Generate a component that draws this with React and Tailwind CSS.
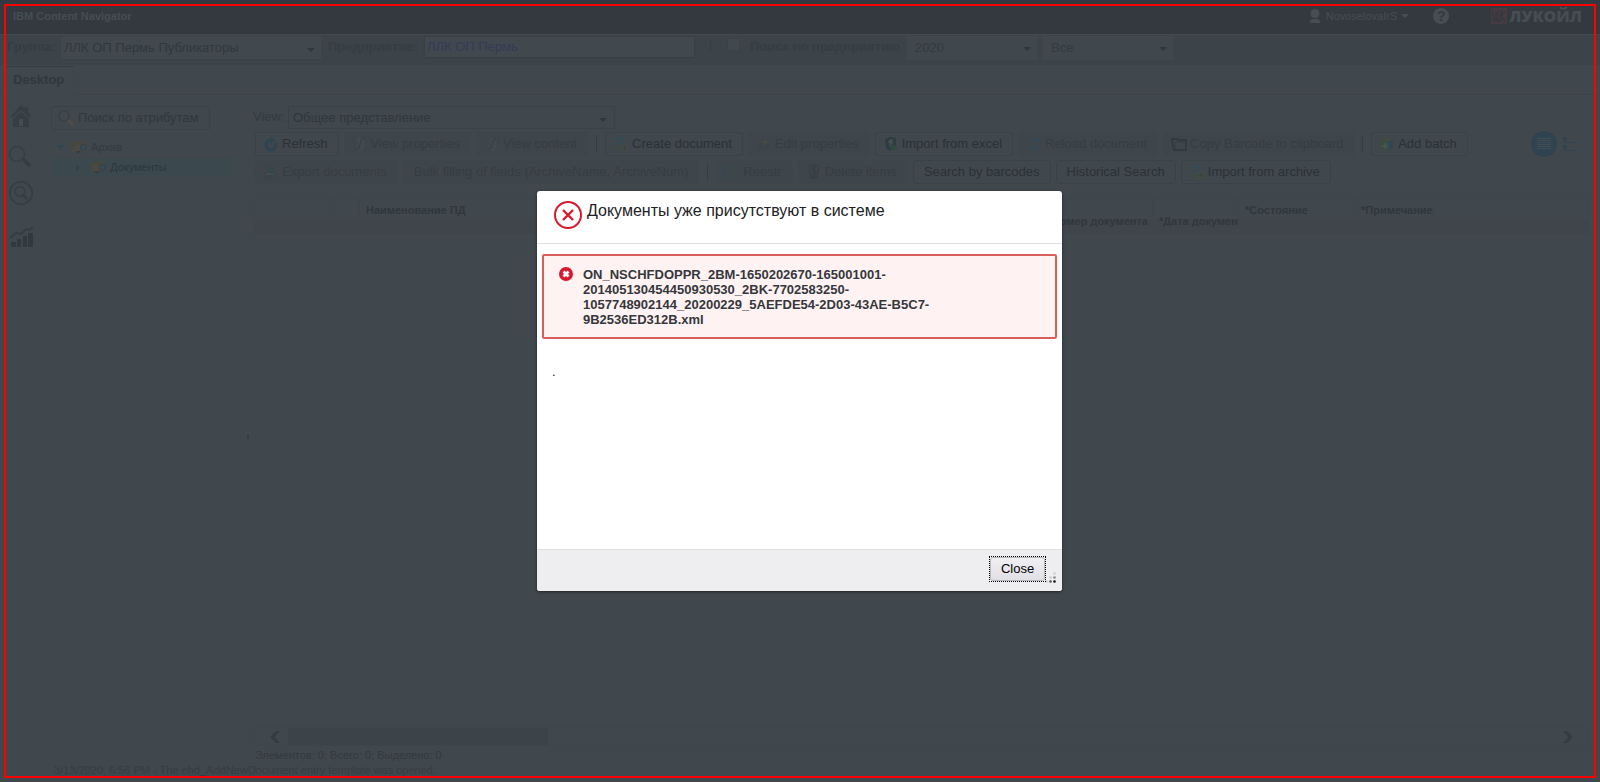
import React from "react";

const svg = "block h-4 w-4 shrink-0";

const icons = {
  refresh: (
    <svg className={svg} viewBox="0 0 16 16" fill="none">
      <path d="M12.6 7.2A5 5 0 1 1 8 4" stroke="#2f4452" strokeWidth="3.2" />
      <path d="M7 .4 12 4.2 7 8z" fill="#2f4452" />
    </svg>
  ),
  props: (
    <svg className={svg} viewBox="0 0 16 16" fill="none">
      <path d="M5 2h6l3 4-3 9H4z" fill="#42494f" />
      <path d="M3 13c3 1 4-1 5-5s2-5 4-6" stroke="#3a4148" strokeWidth="1.5" />
      <path d="m11 2 3 3-1 3" stroke="#3a4148" />
    </svg>
  ),
  create: (
    <svg className={svg} viewBox="0 0 16 16" fill="none">
      <path d="M1 3h9M8 1l3 2-3 2M3 7h7" stroke="#354c55" strokeWidth="1.4" />
      <path d="m2 9 5 1 2 4-8-1z" fill="#3b4947" />
      <circle cx="11.5" cy="11.5" r="3.5" fill="#424c43" />
      <path d="M11.500 9.500v4M9.500 11.500h4" stroke="#38423f" />
    </svg>
  ),
  edit: (
    <svg className={svg} viewBox="0 0 16 16" fill="none">
      <path d="M2 10c2-3 6-4 10-3l2 4-6 3-5-1z" fill="#3a4448" />
      <path d="m11 1-5 6h3l-3 6 6-7H9z" fill="#494a43" />
    </svg>
  ),
  excel: (
    <svg className={svg} viewBox="0 0 16 16" fill="none">
      <path d="m2 3 5-2 6 1v9l-6 4-4-3z" fill="#2e3c42" />
      <path d="m6 4 4-1-1 3h2l-5 5 1-4H5z" fill="#465050" />
      <path d="M7 12c1-4 5-4 7-1v3l-5 1z" fill="#314a3f" />
    </svg>
  ),
  reload: (
    <svg className={svg} viewBox="0 0 16 16" fill="none">
      <path d="M3 7c1-4 5-5 9-3M13 9c-1 4-5 5-9 3" stroke="#354a56" strokeWidth="2" />
      <path d="m10 1 4 4-5 1zM6 15l-4-4 5-1z" fill="#354a56" />
    </svg>
  ),
  folder: (
    <svg className={svg} viewBox="0 0 16 16" fill="none">
      <path d="M1 3h5l1 1h8v10H3L1 5z" stroke="#30373d" strokeWidth="1.5" />
      <path d="m4 6 1 7M5 6h9" stroke="#363d44" />
    </svg>
  ),
  batch: (
    <svg className={svg} viewBox="0 0 16 16" fill="none">
      <path d="m2 4 5-3 7 2v9l-6 3-6-2z" fill="#3b4a43" />
      <path d="m10 5 4-2v9l-4 2z" fill="#314655" />
      <path d="m2 4 5-3 7 2-4 2z" fill="#444942" />
      <path d="M6 7v6M3 10h6" stroke="#495a4e" strokeWidth="1.5" />
    </svg>
  ),
  exporter: (
    <svg className={svg} viewBox="0 0 16 16" fill="none">
      <path d="m1 14 2-6h8l4 6z" fill="#444b51" stroke="#373e45" />
      <path d="m3 3 4-1 2 3 3-1-2 6-6-2 2-2z" fill="#35474c" />
      <path d="M3 12h9" stroke="#373e45" strokeWidth="1.5" />
    </svg>
  ),
  register: (
    <svg className={svg} viewBox="0 0 16 16" fill="none">
      <path d="M16 2.500H1.500v11H16" stroke="#344a50" strokeWidth="1.2" />
      <path d="M4 5.500h11M4 8.500h11M4 11.500h11" stroke="#3b4646" />
    </svg>
  ),
  trash: (
    <svg className={svg} viewBox="0 0 16 16" fill="none">
      <path d="M3 1.500h10M3 3l2 9M13 3l-2 9" stroke="#383f46" strokeWidth="1.5" />
      <path d="M5 4h4l-2 3 3 1-3 4" stroke="#373e45" strokeWidth="1.5" />
      <path d="M3 13c3-2 7-2 10 0-2 3-8 3-10 0z" fill="#393f46" />
    </svg>
  ),
  magnifier: (
    <svg className={svg} viewBox="0 0 16 16" fill="none">
      <circle cx="6" cy="6" r="5.200" stroke="#373d44" strokeWidth="1.200" />
      <path d="m10 10 5 5" stroke="#504e43" strokeWidth="2.600" />
    </svg>
  ),
  treeFolder: (
    <svg className={svg} viewBox="0 0 16 16" fill="none">
      <path d="M0 3h6l2-1h6v9l-6 3-8-2z" fill="#464840" />
      <path d="m1 12 3-6h11l-2 6z" fill="#4a4a42" />
      <path d="m4 12 3 3 3-3z" fill="#353c42" />
      <circle cx="12.500" cy="8.500" r="3" fill="#374b57" stroke="#373e45" />
    </svg>
  ),
};

function Caret({ className }) {
  return (
    <svg className={`pointer-events-none absolute ${className}`} width="8" height="4" viewBox="0 0 8 4">
      <path d="M0 0h8L4 4z" fill="#30373d" />
    </svg>
  );
}

function Select({ label, value, className, textClass, caret = "right-1.5 top-[11px]" }) {
  return (
    <div className={`relative shrink-0 ${className}`}>
      <select
        aria-label={label}
        defaultValue={value}
        className={`h-full w-full appearance-none bg-transparent pr-5 text-[13px] outline-none ${textClass}`}
      >
        <option>{value}</option>
      </select>
      <Caret className={caret} />
    </div>
  );
}

function ToolButton({ icon, children, disabled }) {
  return (
    <button
      type="button"
      disabled={disabled}
      className={`flex h-6 shrink-0 items-center gap-[3px] whitespace-nowrap rounded-[3px] border pr-2.5 text-[13px] leading-4 ${
        icon ? "pl-[7px]" : "pl-2.5"
      } ${
        disabled
          ? "border-[#3e454b] bg-[#3e454b] text-[#363d44]"
          : "border-[#3a4147] text-[#2b3138]"
      }`}
    >
      {icon && icons[icon]}
      {children}
    </button>
  );
}

function Separator() {
  return <div className="mx-[3px] h-[18px] w-px shrink-0 bg-[#363d43]" />;
}

function TopBar() {
  return (
    <header className="flex h-[34px] items-start justify-between bg-[#33393f] pl-[13px] pr-[18px] text-[#464d53]">
      <h1 className="pt-2 text-[11px] font-bold leading-4">IBM Content Navigator</h1>
      <div className="flex h-8 items-center text-[11px]">
        <button type="button" className="flex items-center gap-1">
          <svg width="12" height="14" viewBox="0 0 12 14" fill="#464d53">
            <circle cx="6" cy="4.500" r="4.500" />
            <path d="M1 14c0-3 1-4 3-4h4c2 0 3 1 3 4z" />
          </svg>
          <span className="pl-px">NovoselovaIrS</span>
          <svg width="8" height="4" viewBox="0 0 8 4" fill="#464d53">
            <path d="M0 0h8L4 4z" />
          </svg>
        </button>
        <button
          type="button"
          aria-label="Help"
          className="ml-6 flex h-4 w-4 items-center justify-center rounded-full bg-[#464d53] text-[14px] font-bold leading-4 text-[#33393f]"
        >
          ?
        </button>
        <div className="ml-[42px] flex items-center gap-0.5 text-[16px] font-bold leading-4">
          <svg width="16" height="16" viewBox="0 0 16 16">
            <path d="M0 0h16v16H0z" fill="#463b40" />
            <path d="M2 2v9l3 2V4M7 2v10M10 2v11M14 3l-4 5 4 5M5 13h5" fill="none" stroke="#33393f" strokeWidth="1.300" />
          </svg>
          <span className="font-['Open_Sans',sans-serif] font-extrabold">ЛУКОЙЛ</span>
        </div>
      </div>
    </header>
  );
}

function FilterBar() {
  return (
    <div className="flex h-[31px] items-start border-t border-[#42494f] bg-[#3c4349] pl-[7px] pt-px text-[13px] leading-4 text-[#363d44]">
      <label className="w-[54px] shrink-0 pt-[3px] font-bold">Группа:</label>
      <Select
        label="Группа"
        value="ЛЛК ОП Пермь Публикаторы"
        className="mt-px h-[22px] w-[260px] bg-[#41484e]"
        textClass="pl-[3px] text-[#31383e]"
      />
      <label htmlFor="company" className="ml-[7px] w-24 shrink-0 pt-[3px] font-bold">
        Предприятие:
      </label>
      <input
        id="company"
        defaultValue="ЛЛК ОП Пермь"
        className="h-[22px] w-[271px] shrink-0 border border-[#393f46] bg-[#41484e] px-0.5 pb-0.5 text-[13px] text-[#353b58] outline-none"
      />
      <div className="ml-[15px] mt-1 h-3 w-px shrink-0 bg-[#363d44]" />
      <input
        id="byCompany"
        type="checkbox"
        className="ml-4 mt-0.5 h-[13px] w-[13px] shrink-0 appearance-none border border-[#3a4147] bg-[#41484e]"
      />
      <label htmlFor="byCompany" className="ml-2.5 w-[157px] shrink-0 pt-[3px] font-bold">
        Поиск по предприятию
      </label>
      <Select
        label="Год"
        value="2020"
        className="h-6 w-[130px] bg-[#40474d]"
        textClass="pl-2 text-[#343b41]"
      />
      <Select
        label="Период"
        value="Все"
        className="ml-1.5 h-6 w-[130px] bg-[#40474d]"
        textClass="pl-2 text-[#343b41]"
      />
    </div>
  );
}

function SideNav() {
  return (
    <nav className="flex w-[51px] shrink-0 flex-col items-start pl-2">
      <button type="button" aria-label="Home" className="mt-2.5">
        <svg width="26" height="22" viewBox="0 0 26 22" fill="#363d44">
          <path d="M13 0 17 4V2h3v5l3 4-1 2-9-8-9 8-1-2z" />
          <path d="m13 7 8 7v8H5v-8z" />
          <path d="M11 14h4v7h-4z" fill="#444b51" />
        </svg>
      </button>
      <button type="button" aria-label="Search" className="mt-[17px]">
        <svg width="26" height="24" viewBox="0 0 26 24" fill="none">
          <circle cx="9" cy="10" r="7.500" stroke="#373e45" strokeWidth="1.500" />
          <path d="m15 15 2 2" stroke="#373e45" strokeWidth="2" />
          <path d="m16 16 6 6" stroke="#353c43" strokeWidth="3.500" />
        </svg>
      </button>
      <button type="button" aria-label="Browse" className="mt-3">
        <svg width="26" height="26" viewBox="0 0 26 26" fill="none" stroke="#363d44">
          <circle cx="13" cy="13" r="11.200" strokeWidth="1.600" />
          <circle cx="12" cy="11.500" r="4.800" strokeWidth="1.600" />
          <path d="m15 15 4 4" strokeWidth="3" />
        </svg>
      </button>
      <button type="button" aria-label="Reports" className="mt-5">
        <svg width="26" height="22" viewBox="0 0 26 22" fill="#31383e">
          <path d="M3 16h5v5H3zM9 13h4v8H9zM15 10h4v11h-4zM20 7h5v14h-5z" />
          <path d="m2 12 6-5 5 1 5-5 3 1 4-3" fill="none" stroke="#353c43" strokeWidth="1.800" />
        </svg>
      </button>
    </nav>
  );
}

function Tree() {
  return (
    <aside className="w-[182px] shrink-0 pt-[11px] text-[11px]">
      <button
        type="button"
        className="flex h-6 items-center gap-1 whitespace-nowrap rounded-[3px] border border-[#3a4147] pl-1.5 pr-2.5 text-[13px] leading-4 text-[#31383e]"
      >
        {icons.magnifier}
        Поиск по атрибутам
      </button>
      <ul className="pt-2">
        <li className="flex h-[18px] items-center pl-1.5 text-[#343b41]">
          <svg width="7" height="4" viewBox="0 0 7 4">
            <path d="M0 0h7L3.500 4z" fill="#2f4653" />
          </svg>
          <span className="ml-[7px] flex items-center gap-1">{icons.treeFolder}Архив</span>
        </li>
        <li className="mt-0.5 flex h-[18px] items-center bg-[#3b494f] pl-[25px] text-[#2e353b]">
          <svg width="4" height="7" viewBox="0 0 4 7">
            <path d="M0 0v7l4-3.500z" fill="#31434b" />
          </svg>
          <span className="ml-2.5 flex items-center gap-1">{icons.treeFolder}Документы</span>
        </li>
      </ul>
    </aside>
  );
}

function Toolbar() {
  return (
    <div className="flex flex-col gap-1 pl-0.5 pt-0.5">
      <div className="flex items-center gap-[5px]">
        <ToolButton icon="refresh">Refresh</ToolButton>
        <ToolButton icon="props" disabled>View properties</ToolButton>
        <ToolButton icon="props" disabled>View content</ToolButton>
        <Separator />
        <ToolButton icon="create">Create document</ToolButton>
        <ToolButton icon="edit" disabled>Edit properties</ToolButton>
        <ToolButton icon="excel">Import from excel</ToolButton>
        <ToolButton icon="reload" disabled>Reload document</ToolButton>
        <ToolButton icon="folder" disabled>Copy Barcode to clipboard</ToolButton>
        <Separator />
        <ToolButton icon="batch">Add batch</ToolButton>
        <div className="-my-1 ml-auto mr-3 flex items-center gap-1.5">
          <button type="button" aria-label="Details view">
            <svg className="block" width="26" height="26" viewBox="0 0 26 26">
              <circle cx="13" cy="13" r="13" fill="#2e4451" />
              <path d="M6 7.500h14M6 9.500h14M6 11.500h14M6 13.500h14M6 15.500h14M6 17.500h14" stroke="#434c53" />
            </svg>
          </button>
          <button type="button" aria-label="List view">
            <svg className="block" width="14" height="16" viewBox="0 0 14 16">
              <path d="M0 1h4v4H0zM0 9h4v4H0zM0 6h14v1H0zM0 14h14v1H0z" fill="#2e4451" />
            </svg>
          </button>
        </div>
      </div>
      <div className="flex items-center gap-[5px]">
        <ToolButton icon="exporter" disabled>Export documents</ToolButton>
        <ToolButton disabled>Bulk filling of fields (ArchiveName, ArchiveNum)</ToolButton>
        <Separator />
        <ToolButton icon="register" disabled>Reestr</ToolButton>
        <ToolButton icon="trash" disabled>Delete items</ToolButton>
        <ToolButton>Search by barcodes</ToolButton>
        <ToolButton>Historical Search</ToolButton>
        <ToolButton icon="create">Import from archive</ToolButton>
      </div>
    </div>
  );
}

function Grid() {
  const th = "border-r border-[#3e454b] pl-1.5 text-left font-bold whitespace-nowrap";
  return (
    <table className="mt-3.5 w-full table-fixed border border-[#3e454b] text-[11px] leading-3 text-[#30373d]">
      <colgroup>
        <col className="w-[76px]" />
        <col className="w-[30px]" />
        <col />
        <col className="w-[123px]" />
        <col className="w-[86px]" />
        <col className="w-[116px]" />
        <col className="w-[234px]" />
      </colgroup>
      <thead>
        <tr className="h-[35px] bg-linear-to-b from-[#40474d] from-55% to-[#3f454b] to-60%">
          <th className={th} />
          <th className={th} />
          <th className={`${th} pb-3`}>Наименование ПД</th>
          <th className={`${th} pr-1 pt-2.5`}>
            <div className="text-right">*Номер документа</div>
          </th>
          <th className={`${th} pt-2.5`}>*Дата докумен</th>
          <th className={`${th} pb-3`}>*Состояние</th>
          <th className={`${th} pb-3`}>*Примечание</th>
        </tr>
      </thead>
    </table>
  );
}

function Workspace() {
  return (
    <main className="flex min-w-0 flex-1 flex-col pr-[11px] pt-[11px]">
      <div className="flex h-6 items-start text-[13px] text-[#343b41]">
        <label className="w-[35px] shrink-0 pt-px">View:</label>
        <Select
          label="View"
          value="Общее представление"
          className="h-[23px] w-[327px] border border-[#3a4147]"
          textClass="pl-1 text-[#30373d]"
          caret="right-[7px] top-[11px]"
        />
      </div>
      <Toolbar />
      <Grid />
      <div className="flex-1" />
      <div className="flex h-[19px] items-center border border-[#3e454b] pl-4 pr-[15px]">
        <svg width="10" height="12" viewBox="0 0 10 12">
          <path d="M6 0h4L4.500 6l5.500 6H6L0 6z" fill="#353c42" />
        </svg>
        <div className="ml-2 h-[17px] w-[260px] bg-[#3c4349]" />
        <svg className="ml-auto" width="10" height="12" viewBox="0 0 10 12">
          <path d="M4 0H0l5.500 6L0 12h4l6-6z" fill="#353c42" />
        </svg>
      </div>
      <p className="h-[17px] pl-0.5 text-[11px] leading-[18px] text-[#333a40]">
        Элементов: 0; Всего: 0; Выделено: 0
      </p>
    </main>
  );
}

function Dialog() {
  return (
    <div className="absolute inset-0 flex items-center justify-center pr-px">
      <section
        role="dialog"
        aria-labelledby="dialog-title"
        className="flex h-[400px] w-[525px] flex-col overflow-hidden rounded-[3px] bg-white shadow-[0_1px_3px_rgba(0,0,0,0.5)]"
      >
        <div className="flex h-[53px] shrink-0 items-start gap-[5px] border-b border-[#e0e0e3] pl-[17px] pt-2.5">
          <svg width="28" height="28" viewBox="0 0 28 28" fill="none" stroke="#d9182d">
            <circle cx="14" cy="14" r="13" strokeWidth="2" />
            <path d="m9 9 10 10M19 9 9 19" strokeWidth="2.400" />
          </svg>
          <h2 id="dialog-title" className="text-[16px] leading-5 text-[#222]">
            Документы уже присутствуют в системе
          </h2>
        </div>
        <div className="flex-1 px-[5px] pt-2.5">
          <div className="flex h-[85px] gap-2.5 rounded-[2px] border-2 border-[#d9605a] bg-[#fff2f3] pl-[15px] pt-[11px]">
            <svg className="shrink-0" width="14" height="14" viewBox="0 0 14 14">
              <circle cx="7" cy="7" r="7" fill="#d9182d" />
              <path d="m4.500 4.500 5 5M9.500 4.500l-5 5" stroke="#fff" strokeWidth="2.800" />
            </svg>
            <p className="text-[13px] font-bold leading-[15px] text-[#35373b]">
              ON_NSCHFDOPPR_2BM-1650202670-165001001-
              <br />
              201405130454450930530_2BK-7702583250-
              <br />
              1057748902144_20200229_5AEFDE54-2D03-43AE-B5C7-
              <br />
              9B2536ED312B.xml
            </p>
          </div>
          <p className="pl-2.5 pt-6 text-[13px] leading-[18px] text-[#222]">.</p>
        </div>
        <div className="flex h-[42px] shrink-0 items-start justify-end border-t border-[#e0e0e3] bg-[#eeeef0] pr-1.5 pt-1.5">
          <button
            type="button"
            className="h-[26px] w-[57px] border border-dotted border-black bg-[#eeeef0] text-[13px] leading-4 text-black"
          >
            <span className="flex h-full items-center justify-center rounded-[3px] border border-[#b8b8bc] bg-linear-to-b from-[#f0f0f3] to-[#e0e0e5]">
              Close
            </span>
          </button>
          <svg className="mt-4" width="10" height="11" viewBox="0 0 10 11">
            <circle cx="8.500" cy="1.500" r="1.300" fill="#ccc" />
            <circle cx="8.500" cy="5.500" r="1.300" fill="#888" />
            <circle cx="8.500" cy="9.500" r="1.300" fill="#111" />
            <circle cx="4.500" cy="5.500" r="1.300" fill="#ccc" />
            <circle cx="4.500" cy="9.500" r="1.300" fill="#555" />
            <circle cx="1" cy="9.500" r="1" fill="#ccc" />
          </svg>
        </div>
      </section>
    </div>
  );
}

export default function App() {
  return (
    <div className="relative flex min-h-screen flex-col overflow-hidden bg-[#40474d] font-['Liberation_Sans',Arial,sans-serif]">
      <TopBar />
      <FilterBar />
      <div className="flex h-[30px] items-end border-b border-[#3d4349] pl-1.5">
        <button
          type="button"
          className="-mb-px h-[29px] w-[68px] border-r border-t border-r-[#3e454b] border-t-[#353c42] bg-[#40474d] pb-0.5 pl-[7px] text-left text-[13px] font-bold leading-4 text-[#31383e]"
        >
          Desktop
        </button>
      </div>
      <div className="flex flex-1">
        <SideNav />
        <Tree />
        <div className="flex w-5 shrink-0 items-center justify-end pr-1 pt-4">
          <div className="h-1 w-0.5 bg-[#363d44]" />
        </div>
        <Workspace />
      </div>
      <footer className="h-[19px] pl-[54px] text-[11px] leading-[14px] text-[#363d44]">
        3/13/2020, 6:56 PM - The ehd_AddNewDocument entry template was opened.
      </footer>
      <Dialog />
      <div className="pointer-events-none absolute inset-1 border-2 border-[#ff0000]" />
    </div>
  );
}
